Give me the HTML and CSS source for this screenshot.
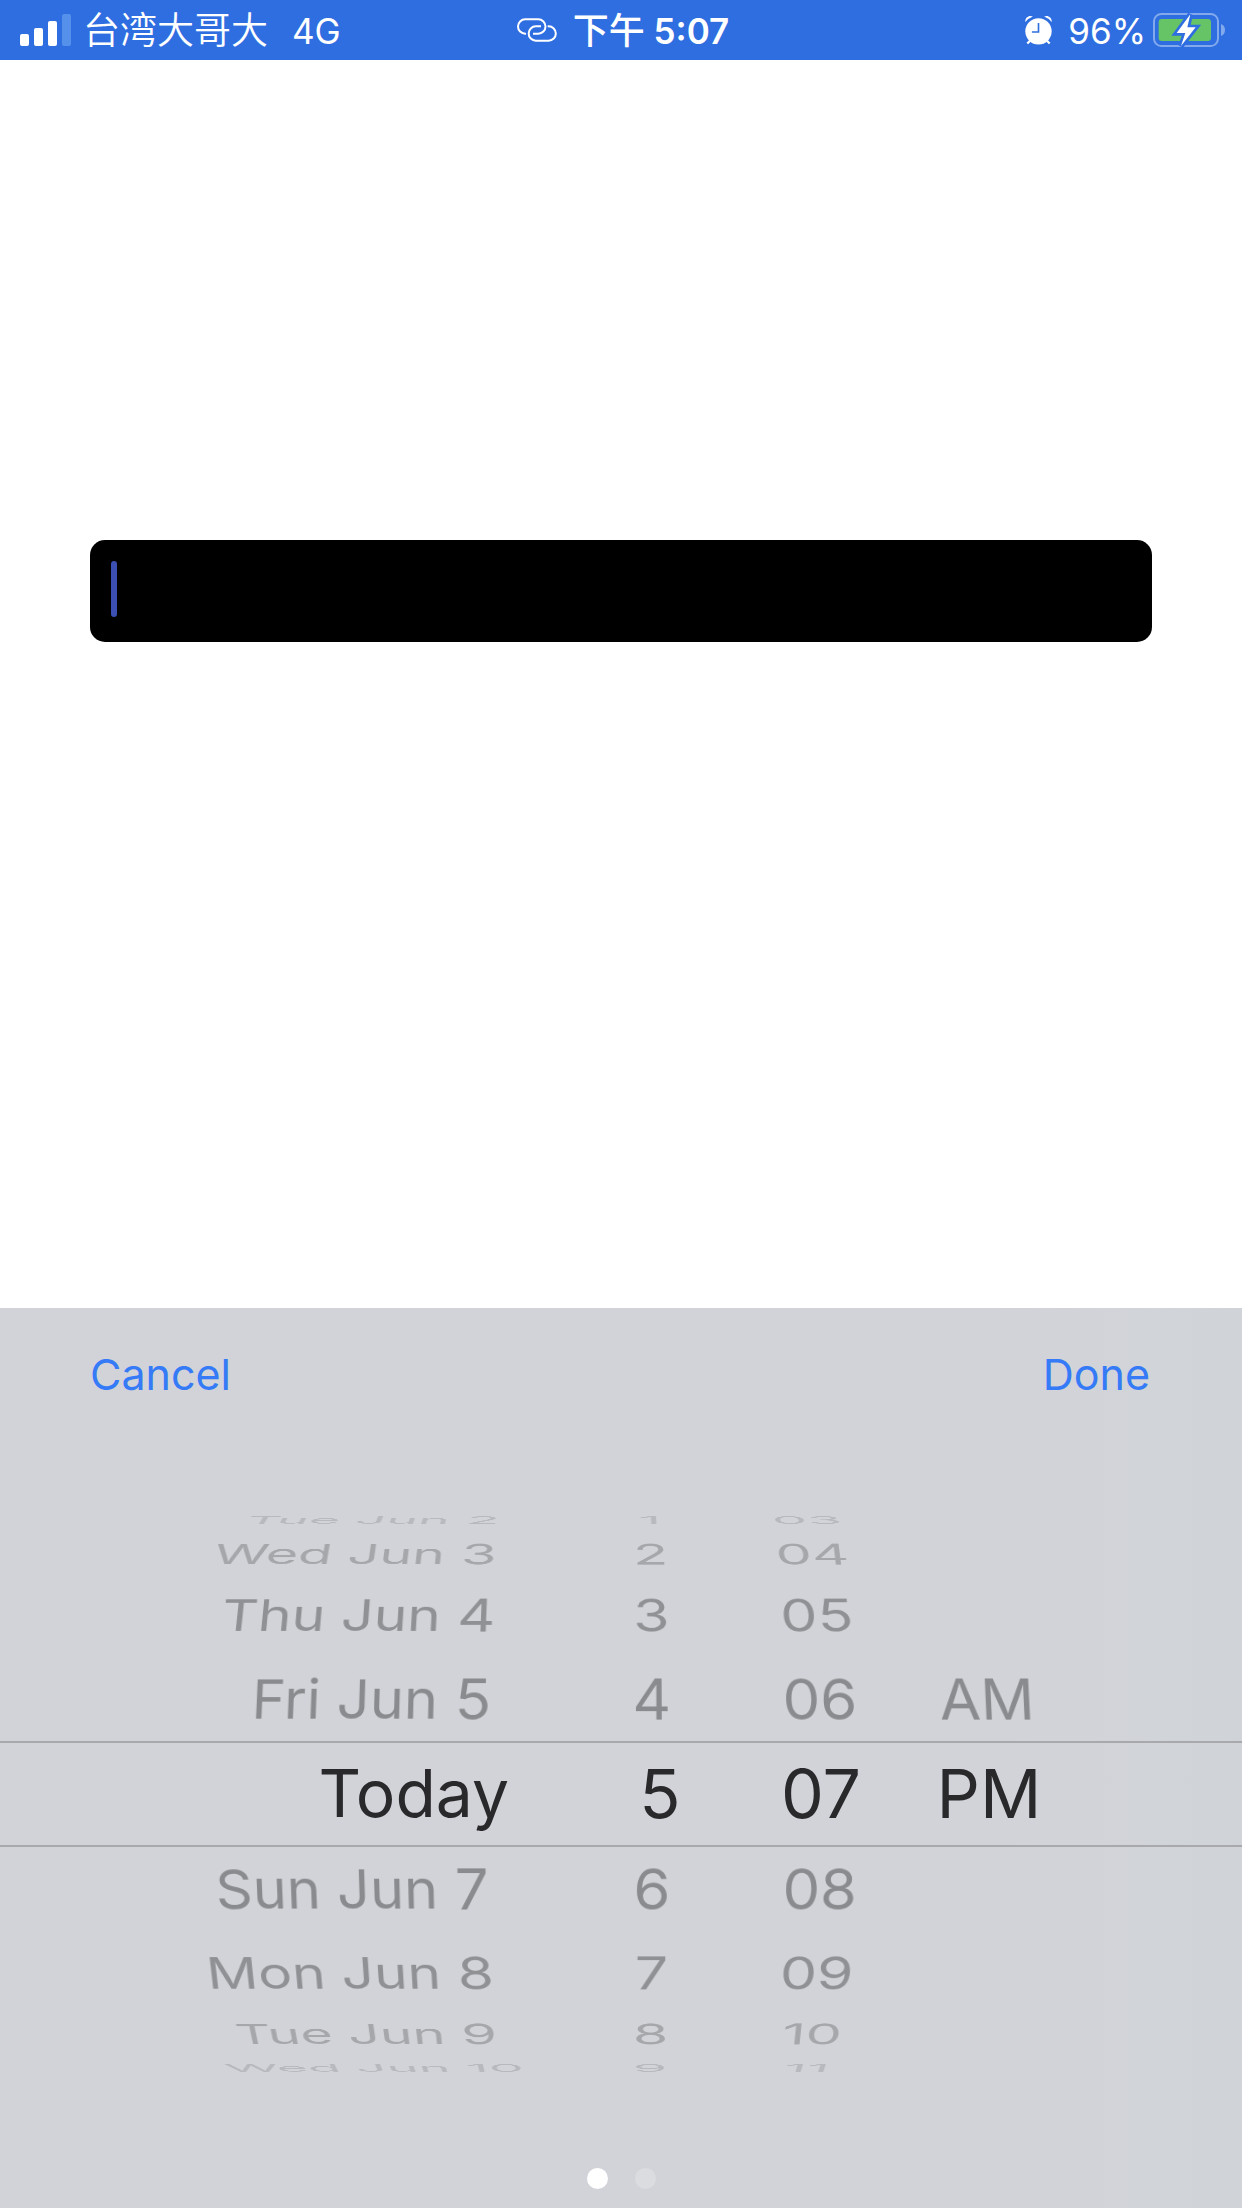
FILE: index.html
```html
<!DOCTYPE html>
<html lang="zh-Hant">
<head>
<meta charset="utf-8">
<meta name="viewport" content="width=device-width, initial-scale=1">
<title>Date picker</title>
<link rel="stylesheet" href="styles.css">
</head>
<body>
<header class="status">
  <div class="status-side">
    <svg class="signal" viewBox="0 0 51 32" aria-hidden="true">
      <rect x="0" y="20" width="9" height="12" rx="2"/>
      <rect x="14" y="14" width="9" height="18" rx="2"/>
      <rect x="28" y="7" width="9" height="25" rx="2"/>
      <rect class="signal-off" x="42" y="0" width="9" height="32" rx="2"/>
    </svg>
    <span class="carrier">台湾大哥大</span>
    <span class="network">4G</span>
  </div>
  <div class="status-time">
    <svg class="link-icon" viewBox="0 0 120 70" aria-hidden="true">
      <path d="M27 46h-2.500A21.500 21.500 0 0 1 24.500 3H64a21.500 21.500 0 0 1 0 43H48"/>
      <path d="M92 24h3a21.500 21.500 0 0 1 0 43H56.500a21.500 21.500 0 0 1 0-43H72"/>
    </svg>
    <time class="clock" datetime="17:07"><span class="clock-period">下午</span> 5:07</time>
  </div>
  <div class="status-side status-right">
    <svg class="alarm" viewBox="0 0 82 90" aria-hidden="true">
      <path class="alarm-foot" d="M17 76 7 86M65 76l10 10"/>
      <circle cx="41" cy="49" r="40"/>
      <path d="M1 21C-1 8 12-2 24 4Q10 9 1 21ZM81 21C83 8 70-2 58 4Q72 9 81 21Z"/>
      <path class="alarm-hand" d="M41 24v27H21"/>
    </svg>
    <span class="percent">96%</span>
    <svg class="battery" viewBox="0 0 222 108" aria-hidden="true">
      <rect class="battery-case" x="6" y="6" width="192" height="96" rx="22"/>
      <path class="battery-nub" d="M207 36q12 5 12 18t-12 18z"/>
      <rect class="battery-level" x="20" y="21" width="157" height="66" rx="9"/>
      <path class="battery-gap" d="M115 7 74 63h26l-13 39 44-56h-25z"/>
      <path class="battery-bolt" d="M115 7 74 63h26l-13 39 44-56h-25z"/>
    </svg>
  </div>
</header>

<main class="content">
  <label class="field">
    <span class="caret" aria-hidden="true"></span>
    <input class="field-input" type="text" aria-label="Date">
  </label>
</main>

<section class="sheet" aria-label="Date and time">
  <div class="toolbar">
    <button class="action" type="button">Cancel</button>
    <button class="action" type="button">Done</button>
  </div>
  <div class="wheel">
    <div class="row up-4"><span class="day">Tue Jun</span><span class="num">2</span><span class="unit">1</span><span class="unit">03</span></div>
    <div class="row up-3"><span class="day">Wed Jun</span><span class="num">3</span><span class="unit">2</span><span class="unit">04</span></div>
    <div class="row up-2"><span class="day">Thu Jun</span><span class="num">4</span><span class="unit">3</span><span class="unit">05</span></div>
    <div class="row up-1"><span class="day">Fri Jun</span><span class="num">5</span><span class="unit">4</span><span class="unit">06</span><span class="unit">AM</span></div>
    <div class="row selected"><span class="today">Today</span><span class="unit hour">5</span><span class="unit">07</span><span class="unit">PM</span></div>
    <div class="row down-1"><span class="day">Sun Jun</span><span class="num">7</span><span class="unit">6</span><span class="unit">08</span></div>
    <div class="row down-2"><span class="day">Mon Jun</span><span class="num">8</span><span class="unit">7</span><span class="unit">09</span></div>
    <div class="row down-3"><span class="day">Tue Jun</span><span class="num">9</span><span class="unit">8</span><span class="unit">10</span></div>
    <div class="row down-4"><span class="day">Wed Jun</span><span class="num">10</span><span class="unit">9</span><span class="unit">11</span></div>
  </div>
  <div class="dots" aria-hidden="true"><span class="dot dot-on"></span><span class="dot"></span></div>
</section>
</body>
</html>
```

FILE: styles.css
```css
* {
  box-sizing: border-box;
}

body {
  margin: 0;
  min-height: 100vh;
  display: flex;
  flex-direction: column;
  background: #fff;
  font-family: Inter, "Noto Sans CJK TC", sans-serif;
}

/* Status bar */
.status {
  display: grid;
  grid-template-columns: 1fr auto 1fr;
  align-items: center;
  height: 60px;
  padding: 0 16px 0 20px;
  background: #2f6ee0;
  color: #fff;
  font-size: 35px;
  line-height: 58px;
  white-space: nowrap;
}

.status-side,
.status-time {
  display: flex;
  align-items: center;
}

.status-right {
  justify-content: flex-end;
}

.carrier,
.network,
.clock,
.percent {
  padding-top: 2px;
}

.signal {
  width: 51px;
  height: 32px;
  margin-right: 12px;
  fill: #fff;
}

.signal-off {
  fill: #5590ea;
}

.carrier {
  font-size: 37px;
  font-weight: 350;
}

.network {
  margin-left: 24px;
}

.link-icon {
  width: 40px;
  height: 24px;
  margin-right: 16px;
  fill: none;
  stroke: #fff;
  stroke-width: 6;
}

.clock {
  font-weight: 600;
}

.clock-period {
  font-size: 36px;
  font-weight: 500;
}

.alarm {
  width: 27px;
  height: 30px;
  margin-right: 16px;
  fill: #fff;
}

.alarm-foot {
  stroke: #fff;
  stroke-width: 7;
}

.alarm-hand {
  fill: none;
  stroke: #2f6ee0;
  stroke-width: 5;
}

.battery {
  width: 74px;
  height: 36px;
  margin-left: 6px;
}

.battery-case {
  fill: none;
  stroke: #83a9ed;
  stroke-width: 6;
}

.battery-nub {
  fill: #83a9ed;
}

.battery-level {
  fill: #67c466;
}

.battery-gap {
  fill: #2f6ee0;
  stroke: #2f6ee0;
  stroke-width: 16;
}

.battery-bolt {
  fill: #fff;
}

/* Text field */
.content {
  flex: 1;
  padding: 480px 90px 60px;
}

.field {
  display: flex;
  align-items: center;
  height: 102px;
  padding: 0 21px 4px;
  border-radius: 15px;
  background: #000;
}

.caret {
  width: 6px;
  height: 56px;
  border-radius: 3px;
  background: #3b50b2;
}

.field-input {
  flex: 1;
  min-width: 0;
  border: 0;
  outline: 0;
  background: transparent;
  color: #fff;
  font: inherit;
  font-size: 43px;
}

/* Picker sheet */
.sheet {
  background: linear-gradient(90deg, #d2d3d8 80%, #d0d4d9);
}

.toolbar {
  display: flex;
  justify-content: space-between;
  padding: 0 92px 0 90px;
}

.action {
  height: 132px;
  padding: 0;
  border: 0;
  background: none;
  color: #357af6;
  font: inherit;
  font-size: 43px;
}

.wheel {
  margin: 65px 0 85px;
  overflow: hidden;
}

.row {
  display: grid;
  grid-template-columns: 437fr 98fr 234fr 104fr 232fr 137fr;
  align-items: center;
  color: #8a8b8e;
  font-size: 60px;
  white-space: nowrap;
}

.row > span {
  min-width: 0;
  line-height: 0;
}

.day {
  font-size: 58px;
  text-align: right;
}

.num {
  padding-left: 17px;
}

.unit {
  display: flex;
  justify-content: center;
}

/* Rows turn away round the drum, 20 degrees a step */
.up-1, .down-1 { height: 84px; }
.up-2, .down-2 { height: 84px; color: #909195; }
.up-3, .down-3 { height: 38px; color: #a6a7ab; }
.up-4, .down-4 { height: 30px; color: #b8b9be; }

.up-1 { transform: perspective(3000px) translateZ(-17px) rotateX(20deg); }
.up-2 { transform: perspective(3000px) translateZ(-65px) rotateX(40deg); }
.up-3 { transform: perspective(3000px) translateZ(-139px) rotateX(60deg); }
.up-4 { transform: perspective(3000px) translateZ(-230px) rotateX(79deg); }
.down-1 { transform: perspective(3000px) translateZ(-17px) rotateX(-20deg); }
.down-2 { transform: perspective(3000px) translateZ(-65px) rotateX(-40deg); }
.down-3 { transform: perspective(3000px) translateZ(-139px) rotateX(-60deg); }
.down-4 { transform: perspective(3000px) translateZ(-230px) rotateX(-79deg); }

.selected {
  height: 106px;
  padding-bottom: 2px;
  border: solid #a8a9ad;
  border-width: 2px 0;
  color: #29292b;
  font-size: 68px;
}

.today {
  grid-column: span 2;
  padding-right: 26px;
  font-size: 66px;
  text-align: right;
}

.hour {
  padding-left: 16px;
}

.dots {
  display: flex;
  justify-content: center;
  gap: 27px;
  padding-bottom: 19px;
}

.dot {
  width: 21px;
  height: 21px;
  border-radius: 50%;
  background: #dbdce0;
}

.dot-on {
  background: #fff;
}
```
